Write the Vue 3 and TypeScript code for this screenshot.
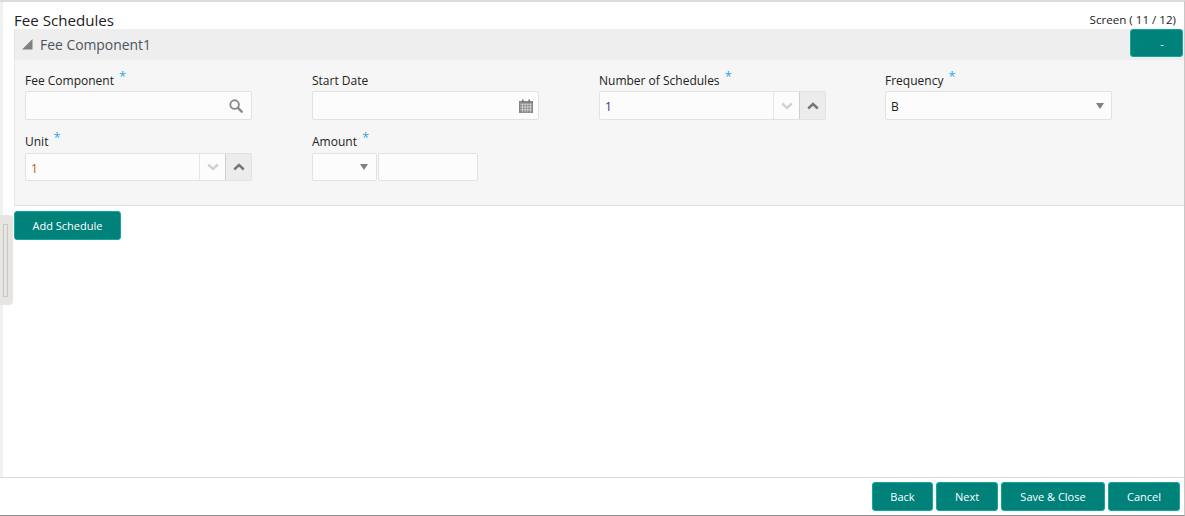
<script setup lang="ts">
const rowOne = [
  { label: 'Fee Component', req: true },
  { label: 'Start Date', req: false },
  { label: 'Number of Schedules', req: true },
  { label: 'Frequency', req: true },
]
const footer = [
  { label: 'Back', w: 61 },
  { label: 'Next', w: 62 },
  { label: 'Save & Close', w: 104 },
  { label: 'Cancel', w: 72 },
]
</script>

<template>
  <div class="page">
    <div class="main">
      <div class="handle"><span class="grip"></span></div>
      <header class="top">
        <h1>Fee Schedules</h1>
        <span class="screen">Screen ( 11 / 12)</span>
      </header>
      <section class="panel">
        <div class="panel-head">
          <div class="panel-title">
            <svg width="11" height="11" viewBox="0 0 11 11"><path d="M0 10.5 10.5 0v10.5z" fill="#808080" /></svg>
            <span>Fee Component1</span>
          </div>
          <button class="btn minus">-</button>
        </div>
        <div class="panel-body">
          <div class="row first">
            <div class="field">
              <label>{{ rowOne[0].label }} <i>*</i></label>
              <div class="input">
                <span class="val"></span>
                <svg class="ico" width="14" height="14" viewBox="0 0 15 15"><circle cx="6" cy="6" r="4.6" fill="none" stroke="#8a8a8a" stroke-width="2" /><path d="M9.6 9.6 13.6 13.6" stroke="#8a8a8a" stroke-width="2.6" stroke-linecap="round" /></svg>
              </div>
            </div>
            <div class="field">
              <label>{{ rowOne[1].label }}</label>
              <div class="input">
                <span class="val"></span>
                <svg class="ico cal" width="14" height="14" viewBox="0 0 14 14">
                  <path d="M0 2h14v12H0z" fill="#858585" />
                  <path d="M3 0.5h1.6v3H3zM9.4 0.5H11v3H9.4z" fill="#777" />
                  <path d="M1 5.2h12M1 8h12M1 10.8h12M3.6 4.6v8.9M6.2 4.6v8.9M8.8 4.6v8.9M11.4 4.6v8.9" stroke="#d7dde2" stroke-width=".8" />
                </svg>
              </div>
            </div>
            <div class="field">
              <label>{{ rowOne[2].label }} <i>*</i></label>
              <div class="input spin">
                <span class="val purple">1</span>
                <span class="step"><svg width="12" height="8" viewBox="0 0 12 8"><path d="M1.2 1.5 6 6l4.8-4.5" fill="none" stroke="#d2d2d2" stroke-width="2.4" /></svg></span>
                <span class="step up"><svg width="12" height="8" viewBox="0 0 12 8"><path d="M1.2 6.5 6 2l4.8 4.5" fill="none" stroke="#777" stroke-width="2.4" /></svg></span>
              </div>
            </div>
            <div class="field">
              <label>{{ rowOne[3].label }} <i>*</i></label>
              <div class="input">
                <span class="val">B</span>
                <span class="caret"></span>
              </div>
            </div>
          </div>
          <div class="row second">
            <div class="field">
              <label>Unit <i>*</i></label>
              <div class="input spin short">
                <span class="val orange">1</span>
                <span class="step"><svg width="12" height="8" viewBox="0 0 12 8"><path d="M1.2 1.5 6 6l4.8-4.5" fill="none" stroke="#d2d2d2" stroke-width="2.4" /></svg></span>
                <span class="step up"><svg width="12" height="8" viewBox="0 0 12 8"><path d="M1.2 6.5 6 2l4.8 4.5" fill="none" stroke="#777" stroke-width="2.4" /></svg></span>
              </div>
            </div>
            <div class="field">
              <label>Amount <i>*</i></label>
              <div class="amount">
                <div class="input short ccy"><span class="val"></span><span class="caret"></span></div>
                <div class="input short num"></div>
              </div>
            </div>
          </div>
        </div>
      </section>
      <button class="btn add">Add Schedule</button>
    </div>
    <footer class="foot">
      <button v-for="b in footer" :key="b.label" class="btn act" :style="{ width: b.w + 'px' }">{{ b.label }}</button>
    </footer>
  </div>
</template>

<style>
html, body { margin: 0; background: #fff; }
</style>

<style scoped>
.page {
  width: 1185px;
  height: 516px;
  box-sizing: border-box;
  border-top: 2px solid #dcdcdc;
  border-bottom: 1px solid #8f8f8f;
  border-right: 1px solid #c8c8c8;
  display: flex;
  flex-direction: column;
  font-family: "Open Sans", "Noto Sans", sans-serif;
  color: #1c1c1c;
  overflow: hidden;
}
.main {
  position: relative;
  flex: 1;
  box-sizing: border-box;
  border-left: 3px solid #f0f0f0;
  padding-left: 11px;
}
.handle {
  position: absolute;
  left: -3px;
  top: 213px;
  width: 13px;
  height: 90px;
  background: #e7e5e1;
  border-radius: 0 4px 4px 0;
  display: flex;
  align-items: center;
}
.grip {
  display: block;
  width: 5px;
  height: 73px;
  margin-left: 3px;
  border: 1px solid #c9c7c2;
  box-sizing: border-box;
}
.top {
  display: flex;
  justify-content: space-between;
  height: 27px;
  align-items: flex-start;
}
h1 {
  margin: 8px 0 0;
  font-size: 15.1px;
  line-height: 20px;
  font-weight: 400;
  color: #222;
}
.screen {
  font-size: 11.6px;
  line-height: 14px;
  margin: 11px 8px 0 0;
  color: #222;
}
.panel {
  height: 177px;
  box-sizing: border-box;
  border-left: 1px solid #e6e6e6;
  border-bottom: 1px solid #dedede;
  background: #f6f6f6;
}
.panel-head {
  position: relative;
  height: 31px;
  background: #eeeeee;
  display: flex;
  justify-content: space-between;
}
.panel-title {
  display: flex;
  align-items: center;
  gap: 7px;
  padding-left: 7px;
  height: 31px;
  font-size: 13.9px;
  color: #4b5560;
}
.btn {
  background: #00827a;
  border: 1px solid #12a79c;
  border-radius: 3px;
  color: #fff;
  font-family: inherit;
  padding: 0;
  font-size: 10.5px;
  box-sizing: border-box;
  cursor: pointer;
}
.minus {
  width: 53px;
  height: 28px;
  margin-right: 1px;
  padding-left: 11px;
  font-size: 11px;
}
.panel-body {
  padding-left: 10px;
}
.row {
  display: flex;
}
.row.first {
  margin-top: 10px;
}
.row.second {
  margin-top: 11px;
}
.second label {
  height: 22px;
}
.field {
  width: 287px;
}
.field:nth-child(3) { width: 286px; }
label {
  display: block;
  height: 21px;
  font-size: 12px;
  line-height: 22px;
  color: #222;
  white-space: nowrap;
}
label i {
  font-style: normal;
  color: #2ea8e0;
  font-size: 13px;
  line-height: 13px;
  margin-left: 2px;
  position: relative;
  top: -4px;
}
.input {
  width: 227px;
  height: 29px;
  box-sizing: border-box;
  border: 1px solid #e2e2e2;
  border-radius: 2px;
  background: #fcfcfc;
  display: flex;
  align-items: center;
  font-size: 12px;
}
.input.short { height: 28px; }
.val {
  flex: 1;
  padding-left: 5px;
  padding-top: 2px;
}
.purple { color: #5a1a7a; }
.orange { color: #b8651a; }
.ico { margin-right: 8px; }
.ico.cal { margin-right: 5px; }
.caret {
  width: 0;
  height: 0;
  border-left: 4.5px solid transparent;
  border-right: 4.5px solid transparent;
  border-top: 6px solid #808080;
  margin-right: 7px;
}
.ccy .caret { margin-right: 8px; }
.step {
  width: 26px;
  height: 100%;
  display: flex;
  align-items: center;
  justify-content: center;
  border-left: 1px solid #e6e6e6;
  box-sizing: border-box;
}
.step.up {
  background: #ececec;
  border-left: 1px solid #cfcfcf;
}
.amount {
  display: flex;
  gap: 1px;
}
.ccy { width: 65px; }
.num { width: 100px; }
.add {
  display: block;
  width: 107px;
  height: 29px;
  margin-top: 5px;
  font-size: 11px;
}
.foot {
  height: 38px;
  flex: none;
  box-sizing: border-box;
  border-top: 1px solid #d9d9d9;
  display: flex;
  justify-content: flex-end;
  gap: 3px;
  padding: 4px 4px 0 0;
}
.act {
  height: 29px;
  font-size: 11px;
}
</style>
